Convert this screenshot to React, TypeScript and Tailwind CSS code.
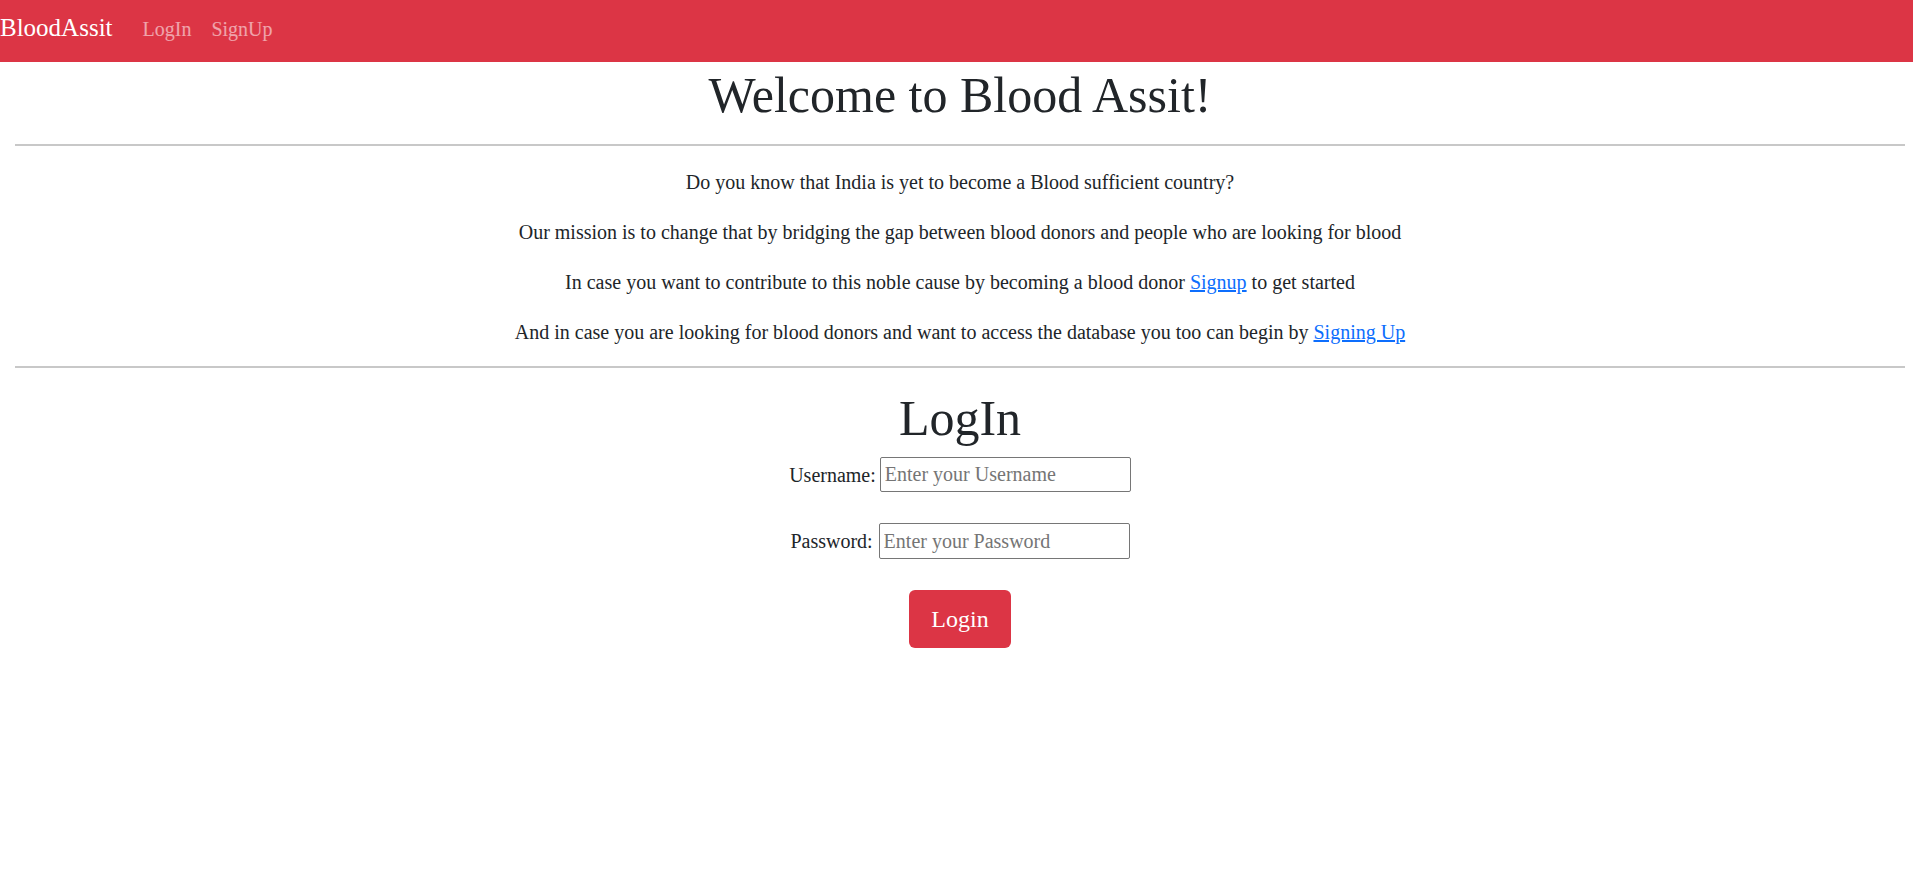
import { useState } from 'react'

export default function App() {
  const [username, setUsername] = useState('')
  const [password, setPassword] = useState('')

  return (
    <div className="min-h-screen bg-white text-[#212529] font-['Liberation_Serif','Times_New_Roman',serif]">
      <nav className="h-[62px] bg-[#dc3545] pt-[13px]">
        <div className="flex items-baseline">
          <a href="#" className="mr-[20px] text-[25px] leading-[30px] text-white">
            BloodAssit
          </a>
          <a href="#" className="px-[10px] text-[20px] leading-[30px] text-white/55">
            LogIn
          </a>
          <a href="#" className="px-[10px] text-[20px] leading-[30px] text-white/55">
            SignUp
          </a>
        </div>
      </nav>

      <main className="pl-[7px]">
        <h1 className="mt-[3px] text-center text-[50px] leading-[60px]">Welcome to Blood Assit!</h1>
        <hr className="mx-[8px] mt-[19px] border-t-2 border-[#c8c8c8]" />

        <div className="mt-[21px] space-y-[20px] text-center text-[20px] leading-[30px]">
          <p>Do you know that India is yet to become a Blood sufficient country?</p>
          <p>Our mission is to change that by bridging the gap between blood donors and people who are looking for blood</p>
          <p>
            In case you want to contribute to this noble cause by becoming a blood donor{' '}
            <a href="#" className="text-[#0d6efd] underline">Signup</a> to get started
          </p>
          <p>
            And in case you are looking for blood donors and want to access the database you too can begin by{' '}
            <a href="#" className="text-[#0d6efd] underline">Signing Up</a>
          </p>
        </div>

        <hr className="mx-[8px] mt-[19px] border-t-2 border-[#c8c8c8]" />

        <h1 className="mt-[20px] text-center text-[50px] leading-[60px]">LogIn</h1>

        <form className="flex flex-col items-center text-[20px]" onSubmit={(e) => e.preventDefault()}>
          <div className="mt-[9px] flex items-center gap-[4px]">
            <label htmlFor="username" className="leading-[30px]">Username:</label>
            <input
              id="username"
              type="text"
              value={username}
              onChange={(e) => setUsername(e.target.value)}
              placeholder="Enter your Username"
              className="h-[35px] w-[251px] rounded-[2px] border border-[#767676] px-[4px] placeholder:text-[#757575]"
            />
          </div>

          <div className="mt-[31px] flex items-center gap-[6px]">
            <label htmlFor="password" className="leading-[30px]">Password:</label>
            <input
              id="password"
              type="password"
              value={password}
              onChange={(e) => setPassword(e.target.value)}
              placeholder="Enter your Password"
              className="h-[36px] w-[251px] rounded-[2px] border border-[#767676] px-[4px] placeholder:text-[#757575]"
            />
          </div>

          <button
            type="submit"
            className="mt-[31px] h-[58px] w-[102px] rounded-[6px] bg-[#dc3545] text-[24px] text-white"
          >
            Login
          </button>
        </form>
      </main>
    </div>
  )
}
